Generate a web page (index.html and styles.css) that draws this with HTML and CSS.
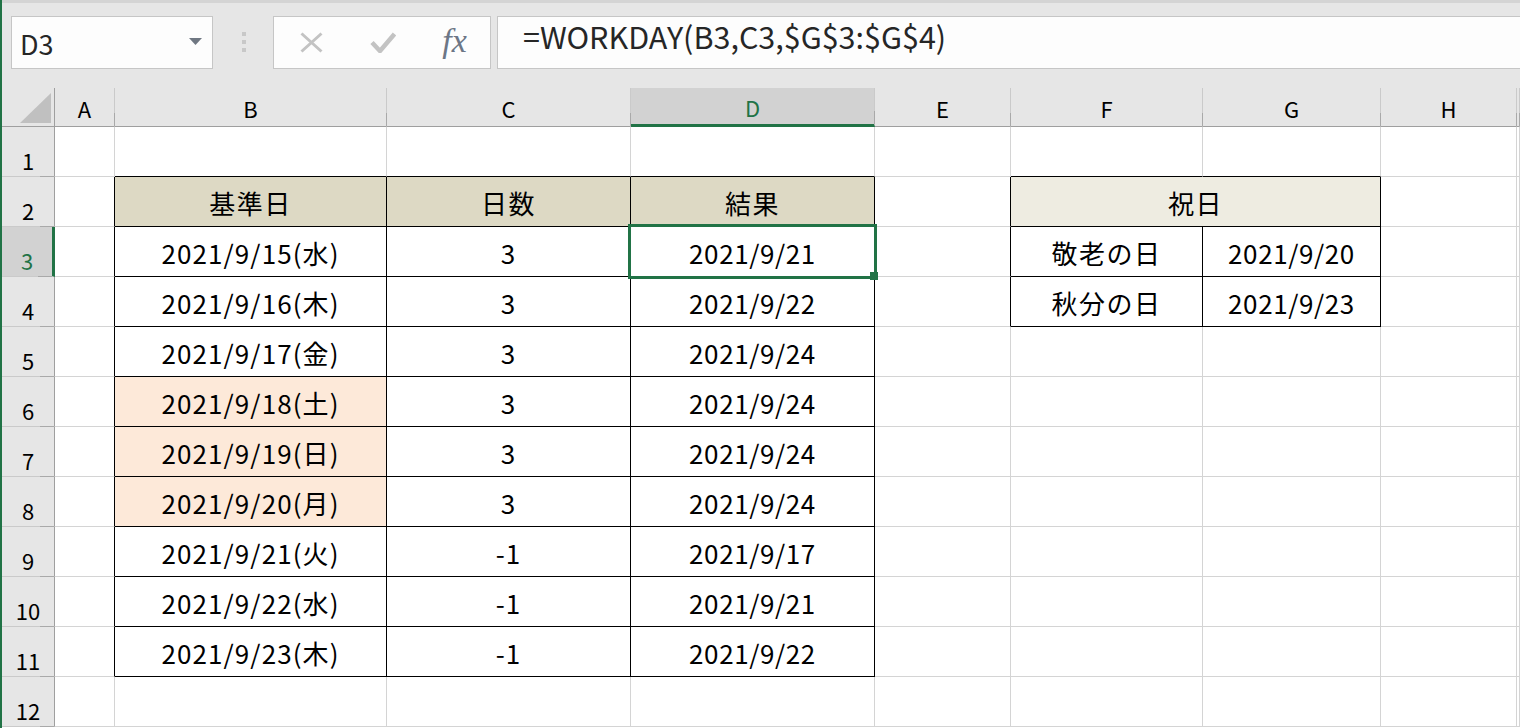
FILE: index.html
```html
<!DOCTYPE html>
<html lang="ja">
<head>
<meta charset="utf-8">
<title>WORKDAY</title>
<link rel="stylesheet" href="styles.css">
</head>
<body>
<div class="app">

    <!-- name box + formula bar -->
    <div class="bar">
        <div class="name-box">
            <span>D3</span>
            <svg class="drop" width="13" height="7" viewBox="0 0 13 7"><path d="M0 0h13L6.5 7z" fill="#6f7782"/></svg>
        </div>
        <div class="grip"><i></i><i></i><i></i></div>
        <div class="fn-box">
            <span class="slot">
                <svg width="23" height="21" viewBox="0 0 23 21"><path d="M1.5 1.5l20 18M21.5 1.5l-20 18" stroke="#c3c3c3" stroke-width="3" fill="none"/></svg>
            </span>
            <span class="slot">
                <svg width="26" height="21" viewBox="0 0 26 21"><path d="M2 10.5l8 8.5L24.5 2" stroke="#c3c3c3" stroke-width="4.5" fill="none"/></svg>
            </span>
            <span class="slot fx">fx</span>
        </div>
        <div class="formula">=WORKDAY(B3,C3,$G$3:$G$4)</div>
    </div>

    <div class="sheet">
        <!-- column headers -->
        <div class="corner"><span class="tri"></span></div>
        <div class="ch">A</div>
        <div class="ch">B</div>
        <div class="ch">C</div>
        <div class="ch on">D</div>
        <div class="ch">E</div>
        <div class="ch">F</div>
        <div class="ch">G</div>
        <div class="ch">H</div>
        <div class="ch"></div>

        <!-- 1 -->
        <div class="rh">1</div>
        <div class="c"></div>
        <div class="c kb"></div>
        <div class="c kb"></div>
        <div class="c kb"></div>
        <div class="c"></div>
        <div class="c kb"></div>
        <div class="c kb"></div>
        <div class="c"></div>
        <div class="c"></div>

        <!-- 2 -->
        <div class="rh">2</div>
        <div class="c kr"></div>
        <div class="c k tan jp">基準日</div>
        <div class="c k tan jp">日数</div>
        <div class="c k tan jp">結果</div>
        <div class="c kr"></div>
        <div class="c k light jp span2">祝日</div>
        <div class="c"></div>
        <div class="c"></div>

        <!-- 3 -->
        <div class="rh on">3</div>
        <div class="c kr"></div>
        <div class="c k mono">2021/9/15(水)</div>
        <div class="c k mono">3</div>
        <div class="c k cur">2021/9/21<span class="sel"></span><span class="handle"></span></div>
        <div class="c kr"></div>
        <div class="c k jp">敬老の日</div>
        <div class="c k">2021/9/20</div>
        <div class="c"></div>
        <div class="c"></div>

        <!-- 4 -->
        <div class="rh">4</div>
        <div class="c kr"></div>
        <div class="c k mono">2021/9/16(木)</div>
        <div class="c k mono">3</div>
        <div class="c k">2021/9/22</div>
        <div class="c kr"></div>
        <div class="c k jp">秋分の日</div>
        <div class="c k">2021/9/23</div>
        <div class="c"></div>
        <div class="c"></div>

        <!-- 5 -->
        <div class="rh">5</div>
        <div class="c kr"></div>
        <div class="c k mono">2021/9/17(金)</div>
        <div class="c k mono">3</div>
        <div class="c k">2021/9/24</div>
        <div class="c"></div>
        <div class="c"></div>
        <div class="c"></div>
        <div class="c"></div>
        <div class="c"></div>

        <!-- 6 -->
        <div class="rh">6</div>
        <div class="c kr"></div>
        <div class="c k mono peach">2021/9/18(土)</div>
        <div class="c k mono">3</div>
        <div class="c k">2021/9/24</div>
        <div class="c"></div>
        <div class="c"></div>
        <div class="c"></div>
        <div class="c"></div>
        <div class="c"></div>

        <!-- 7 -->
        <div class="rh">7</div>
        <div class="c kr"></div>
        <div class="c k mono peach">2021/9/19(日)</div>
        <div class="c k mono">3</div>
        <div class="c k">2021/9/24</div>
        <div class="c"></div>
        <div class="c"></div>
        <div class="c"></div>
        <div class="c"></div>
        <div class="c"></div>

        <!-- 8 -->
        <div class="rh">8</div>
        <div class="c kr"></div>
        <div class="c k mono peach">2021/9/20(月)</div>
        <div class="c k mono">3</div>
        <div class="c k">2021/9/24</div>
        <div class="c"></div>
        <div class="c"></div>
        <div class="c"></div>
        <div class="c"></div>
        <div class="c"></div>

        <!-- 9 -->
        <div class="rh">9</div>
        <div class="c kr"></div>
        <div class="c k mono">2021/9/21(火)</div>
        <div class="c k mono">-1</div>
        <div class="c k">2021/9/17</div>
        <div class="c"></div>
        <div class="c"></div>
        <div class="c"></div>
        <div class="c"></div>
        <div class="c"></div>

        <!-- 10 -->
        <div class="rh">10</div>
        <div class="c kr"></div>
        <div class="c k mono">2021/9/22(水)</div>
        <div class="c k mono">-1</div>
        <div class="c k">2021/9/21</div>
        <div class="c"></div>
        <div class="c"></div>
        <div class="c"></div>
        <div class="c"></div>
        <div class="c"></div>

        <!-- 11 -->
        <div class="rh">11</div>
        <div class="c kr"></div>
        <div class="c k mono">2021/9/23(木)</div>
        <div class="c k mono">-1</div>
        <div class="c k">2021/9/22</div>
        <div class="c"></div>
        <div class="c"></div>
        <div class="c"></div>
        <div class="c"></div>
        <div class="c"></div>

        <!-- 12 -->
        <div class="rh">12</div>
        <div class="c"></div>
        <div class="c"></div>
        <div class="c"></div>
        <div class="c"></div>
        <div class="c"></div>
        <div class="c"></div>
        <div class="c"></div>
        <div class="c"></div>
        <div class="c"></div>
    </div>
</div>
</body>
</html>
```

FILE: styles.css
```css
/**
 * Generic styles
 */
* {
    box-sizing: border-box;
}
html, body {
    margin: 0;
    height: 100%;
    overflow: hidden;
}
body {
    font-family: "Noto Sans CJK JP", sans-serif;
    color: #000;
    background: #fff;
}
.app {
    height: 728px;
    border-left: 2px solid #217346;
    overflow: hidden;
}

/**
 * Name box and formula bar
 */
.bar {
    display: flex;
    align-items: flex-start;
    height: 88px;
    padding: 13px 0 0 9px;
    background: #e6e6e6;
    border-top: 3px solid #d4d4d4;
}
.name-box,
.fn-box,
.formula {
    height: 53px;
    background: #fdfdfd;
    border: 1px solid #c6c6c6;
}
.name-box {
    display: flex;
    align-items: center;
    justify-content: space-between;
    width: 202px;
    padding: 2px 10px 0 8px;
    font-size: 27px;
    color: #262626;
}
.name-box .drop {
    margin-top: -5px;
}
.grip {
    display: flex;
    flex-direction: column;
    align-items: center;
    gap: 4px;
    width: 60px;
    padding: 16px 0 0 1px;
}
.grip i {
    width: 4px;
    height: 4px;
    background: #c8c8c8;
}
.fn-box {
    display: flex;
    width: 218px;
    padding-left: 2px;
}
.slot {
    display: flex;
    align-items: center;
    justify-content: center;
    width: 71px;
}
.fx {
    font-family: "Liberation Serif", serif;
    font-style: italic;
    font-size: 34px;
    color: #6c7686;
    padding: 0 0 4px 2px;
}
.formula {
    flex: 1;
    margin-left: 6px;
    margin-right: -4px;
    padding: 0 0 0 25px;
    font-size: 30.5px;
    line-height: 38px;
    color: #262626;
}

/**
 * Worksheet grid
 */
.sheet {
    display: grid;
    grid-template-columns: 53px 60px 272px 244px 244px 136px 192px 178px 136px 1fr;
    grid-template-rows: 39px;
    grid-auto-rows: 50px;
}
.corner,
.ch,
.rh,
.c {
    display: flex;
    align-items: center;
    justify-content: center;
    border-right: 1px solid #d4d4d4;
    border-bottom: 1px solid #d4d4d4;
    white-space: nowrap;
}

/* headers */
.corner {
    position: relative;
    background: #e6e6e6;
    border-right-color: #9f9f9f;
    border-bottom-color: #9f9f9f;
}
.tri {
    position: absolute;
    right: 3px;
    bottom: 3px;
    width: 31px;
    height: 30px;
    background: #c0c0c0;
    clip-path: polygon(100% 0, 100% 100%, 0 100%);
}
.ch {
    position: relative;
    background: #e6e6e6;
    border-right-color: #cacaca;
    border-bottom-color: #9f9f9f;
    font-size: 22px;
    padding-top: 1px;
}
.ch::after {
    content: "";
    position: absolute;
    right: -1px;
    bottom: 0;
    width: 1px;
    height: 13px;
    background: #a9a9a9;
}
.ch.on {
    background: #d2d2d2;
    color: #217346;
    border-bottom: 3px solid #217346;
}
.rh {
    position: relative;
    background: #e6e6e6;
    border-right-color: #9f9f9f;
    border-bottom-color: #cacaca;
    font-size: 22px;
    padding-top: 16px;
}
.rh::after {
    content: "";
    position: absolute;
    right: 0;
    bottom: -1px;
    width: 14px;
    height: 1px;
    background: #a9a9a9;
}
.rh.on {
    background: #d2d2d2;
    color: #217346;
    border-right: 3px solid #217346;
}

/* cells */
.c {
    font-size: 26px;
    letter-spacing: 0.6px;
    padding-top: 2px;
}
/* the date column is set wider, like a fixed-pitch gothic */
.mono {
    letter-spacing: 1.1px;
}
.jp {
    letter-spacing: 1.5px;
}
.kr {
    border-right-color: #000;
}
.kb {
    border-bottom-color: #000;
}
.k {
    border-right-color: #000;
    border-bottom-color: #000;
}
.span2 {
    grid-column: span 2;
}
.tan {
    background: #ddd9c4;
}
.light {
    background: #eeece1;
}
.peach {
    background: #fde9d9;
}

/* active cell */
.cur {
    position: relative;
}
.sel {
    position: absolute;
    top: -3px;
    left: -3px;
    right: -3px;
    bottom: -3px;
    border: 3px solid #217346;
    z-index: 2;
}
.handle {
    position: absolute;
    right: -4px;
    bottom: -4px;
    width: 8px;
    height: 8px;
    background: #217346;
    z-index: 3;
}
```
